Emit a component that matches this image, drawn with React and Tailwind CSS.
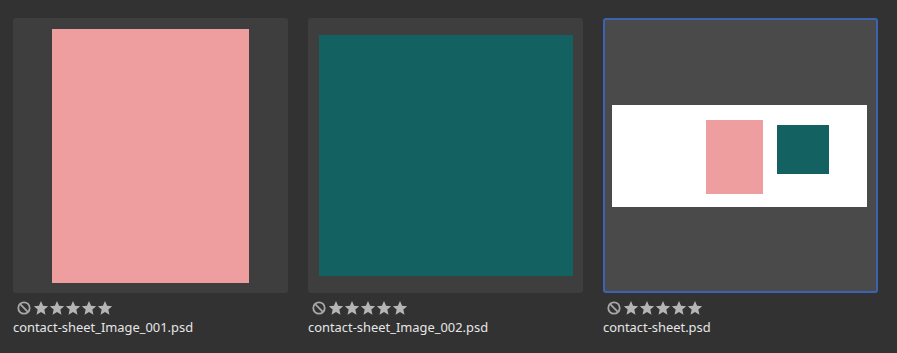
import React from "react";

const font = { fontFamily: '"Noto Sans", "Open Sans", sans-serif' };

function BanIcon() {
  return (
    <svg width="14" height="14" viewBox="0 0 14 14" className="shrink-0">
      <circle cx="7" cy="7" r="5.7" fill="none" stroke="#a8a8a8" strokeWidth="1.8" />
      <line x1="3.2" y1="3.2" x2="10.8" y2="10.8" stroke="#a8a8a8" strokeWidth="1.8" />
    </svg>
  );
}

function Star() {
  return (
    <svg width="16" height="16" viewBox="0 0 24 24" className="shrink-0">
      <path
        d="M12 1.5l3.1 7.1 7.7.7-5.8 5.1 1.7 7.6L12 18l-6.7 4 1.7-7.6-5.8-5.1 7.7-.7z"
        fill="#b5b5b5"
      />
    </svg>
  );
}

function Rating() {
  return (
    <div className="flex items-center gap-[1px] pl-[4px] h-[16px]">
      <BanIcon />
      <div className="flex items-center ml-[1px]">
        <Star />
        <Star />
        <Star />
        <Star />
        <Star />
      </div>
    </div>
  );
}

function Thumb({ selected, name, children }) {
  return (
    <div className="flex flex-col w-[275px]">
      <div
        className={
          selected
            ? "h-[275px] rounded-[3px] bg-[#4a4a4a] border-2 border-[#3b62b3] flex items-center justify-center"
            : "h-[275px] rounded-[3px] bg-[#3e3e3e] flex items-center justify-center"
        }
      >
        {children}
      </div>
      <div className="mt-[7px]">
        <Rating />
      </div>
      <div className="mt-[2px] text-[12.9px] leading-[19px] text-[#e6e6e6]" style={font}>
        {name}
      </div>
    </div>
  );
}

export default function App() {
  return (
    <div className="w-[897px] h-[353px] bg-[#323232] overflow-hidden">
      <div className="flex gap-[20px] pl-[13px] pt-[18px]">
        <Thumb name="contact-sheet_Image_001.psd">
          <div className="w-[197px] h-[254px] bg-[#ee9e9e]" />
        </Thumb>
        <Thumb name="contact-sheet_Image_002.psd">
          <div className="w-[254px] h-[241px] bg-[#136161]" />
        </Thumb>
        <Thumb selected name="contact-sheet.psd">
          <div className="w-[255px] h-[102px] bg-white flex items-start pl-[94px] pt-[15px] mr-[2px]">
            <div className="w-[57px] h-[74px] bg-[#ee9e9e]" />
            <div className="w-[52px] h-[49px] bg-[#136161] ml-[14px] mt-[5px]" />
          </div>
        </Thumb>
      </div>
    </div>
  );
}
